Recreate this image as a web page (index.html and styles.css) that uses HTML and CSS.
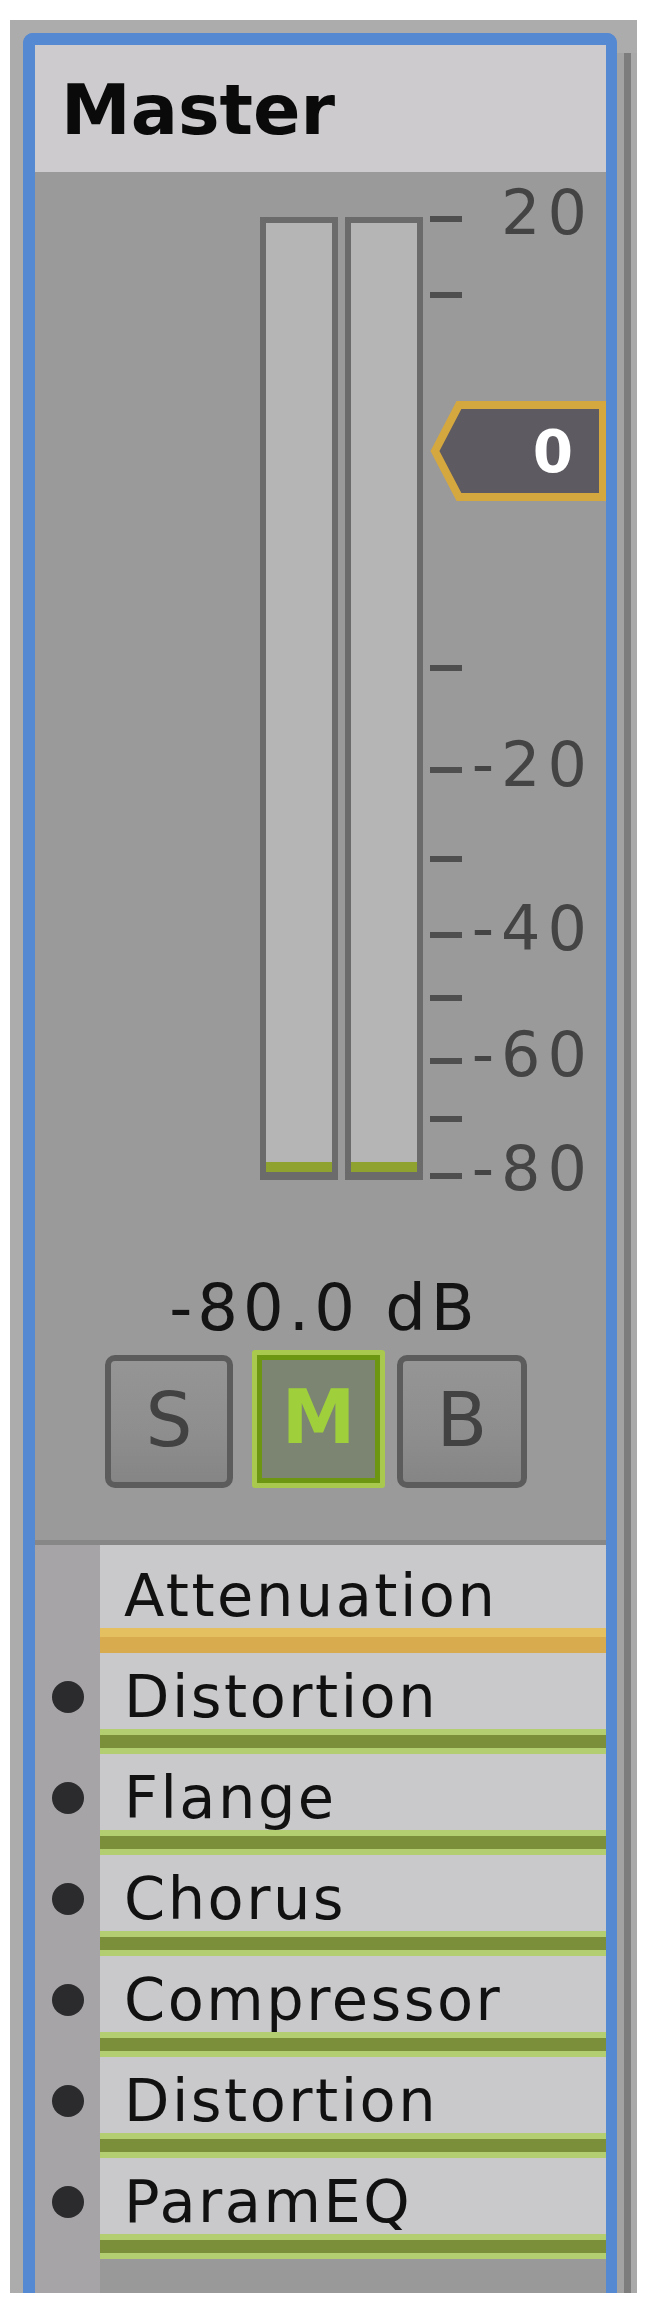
FILE: index.html
```html
<!DOCTYPE html>
<html lang="en">
<head>
<meta charset="UTF-8">
<title>Master</title>
<link rel="stylesheet" href="styles.css">
</head>
<body>
<div class="frame">
  <div class="mixer">
    <div class="title">Master</div>

    <div class="strip">
      <div class="meter">
        <div class="bars">
          <div class="bar"><span class="level"></span></div>
          <div class="bar"><span class="level"></span></div>
        </div>
        <div class="scale">
          <i class="tick" style="top:-1px"></i>
          <i class="tick" style="top:75px"></i>
          <i class="tick" style="top:448px"></i>
          <i class="tick" style="top:550px"></i>
          <i class="tick" style="top:639px"></i>
          <i class="tick" style="top:715px"></i>
          <i class="tick" style="top:778px"></i>
          <i class="tick" style="top:841px"></i>
          <i class="tick" style="top:899px"></i>
          <i class="tick" style="top:956px"></i>

          <span class="mark" style="top:-4px">20</span>
          <span class="mark" style="top:548px">-20</span>
          <span class="mark" style="top:712px">-40</span>
          <span class="mark" style="top:838px">-60</span>
          <span class="mark" style="top:952px">-80</span>

          <div class="fader">
            <svg width="178" height="102" viewBox="0 0 178 102">
              <polygon points="5,51 29,5 173,5 173,97 29,97" fill="#5d5a61" stroke="#d5a73f" stroke-width="8"/>
            </svg>
            <span class="fader-value">0</span>
          </div>
        </div>
      </div>

      <div class="db">-80.0 dB</div>

      <div class="buttons">
        <button class="btn btn-s">S</button>
        <button class="btn btn-m">M</button>
        <button class="btn btn-b">B</button>
      </div>
    </div>

    <ul class="fx">
      <li class="fx-item current"><span class="led-slot"></span><span class="fx-name">Attenuation</span></li>
      <li class="fx-item"><span class="led-slot"><span class="led"></span></span><span class="fx-name">Distortion</span></li>
      <li class="fx-item"><span class="led-slot"><span class="led"></span></span><span class="fx-name">Flange</span></li>
      <li class="fx-item"><span class="led-slot"><span class="led"></span></span><span class="fx-name">Chorus</span></li>
      <li class="fx-item"><span class="led-slot"><span class="led"></span></span><span class="fx-name">Compressor</span></li>
      <li class="fx-item"><span class="led-slot"><span class="led"></span></span><span class="fx-name">Distortion</span></li>
      <li class="fx-item"><span class="led-slot"><span class="led"></span></span><span class="fx-name">ParamEQ</span></li>
    </ul>
  </div>
  <div class="rail"></div>
</div>
</body>
</html>
```

FILE: styles.css
```css
body {
  margin: 0;
  background-color: #ffffff;
  font-family: 'DejaVu Sans', 'Liberation Sans', sans-serif;
  color: #111111;
}

.frame {
  display: flex;
  width: 627px;
  margin: 20px 0 0 10px;
  padding: 13px 0 0 13px;
  box-sizing: border-box;
  background-color: #acacac;
}

.mixer {
  width: 594px;
  box-sizing: border-box;
  border: 12px solid #5589d2;
  border-right-width: 11px;
  border-bottom: 0;
  border-radius: 10px 10px 0 0;
  overflow: hidden;
}

.rail {
  width: 20px;
  margin-top: 20px;
  background: linear-gradient(to right, #a3a3a3 7px, #7d7d7d 7px 14px, #a9a9a9 14px);
}

.title {
  height: 127px;
  box-sizing: border-box;
  padding: 30px 0 0 26px;
  background-color: #cdcbcd;
  font-size: 70px;
  line-height: 70px;
  font-weight: bold;
  color: #0a0a0a;
}

/* meter + fader section */
.strip {
  padding: 45px 0 52px;
  background-color: #9a9a9a;
  border-bottom: 5px solid #878787;
}

.meter {
  display: flex;
  margin-left: 225px;
}

.bars {
  display: flex;
  gap: 7px;
}

.bar {
  display: flex;
  flex-direction: column;
  justify-content: flex-end;
  width: 78px;
  height: 963px;
  box-sizing: border-box;
  border: 6px solid #6b6b6b;
  border-bottom-width: 8px;
  background-color: #b5b5b5;
}

.level {
  height: 10px;
  background-color: #8fa22f;
}

.scale {
  position: relative;
  width: 185px;
}

.tick {
  position: absolute;
  left: 7px;
  width: 32px;
  height: 6px;
  background-color: #4f4f4f;
}

.mark {
  position: absolute;
  right: 12px;
  transform: translateY(-50%);
  font-size: 62px;
  line-height: 62px;
  letter-spacing: 7px;
  color: #444444;
}

.fader {
  position: absolute;
  top: 183px;
  left: 7px;
  width: 178px;
  height: 102px;
}

.fader svg {
  display: block;
}

.fader-value {
  position: absolute;
  top: 0;
  left: 95px;
  width: 56px;
  text-align: center;
  font-size: 58px;
  line-height: 104px;
  font-weight: bold;
  color: #ffffff;
}

.db {
  margin-top: 96px;
  padding-left: 8px;
  text-align: center;
  font-size: 64px;
  line-height: 64px;
  letter-spacing: 5px;
  color: #141414;
}

.buttons {
  display: flex;
  align-items: flex-end;
  height: 138px;
  margin-top: 10px;
  padding-left: 70px;
}

.btn {
  display: flex;
  align-items: center;
  justify-content: center;
  width: 130px;
  height: 133px;
  padding: 0 0 4px;
  box-sizing: border-box;
  border: 6px solid #5c5c5c;
  border-radius: 10px;
  background: linear-gradient(#959595, #8e8e8e 60%, #858585);
  font-family: 'DejaVu Sans', sans-serif;
  font-size: 74px;
  color: #424242;
}

.btn-s {
  width: 128px;
}

.btn-m {
  width: 133px;
  height: 138px;
  margin-left: 19px;
  border: 5px solid #a9c94e;
  border-radius: 3px;
  box-shadow: inset 0 0 0 5px #6d9712;
  background: #7b8571;
  font-weight: bold;
  color: #9fd03b;
}

.btn-b {
  margin-left: 12px;
}

/* effects chain */
.fx {
  list-style: none;
  margin: 0;
  padding: 0 0 34px;
  background: linear-gradient(to right, #a6a4a6 65px, #999999 65px);
}

.fx-item {
  display: flex;
}

.led-slot {
  display: flex;
  justify-content: center;
  width: 65px;
}

.led {
  width: 32px;
  height: 32px;
  margin-top: 28px;
  border-radius: 50%;
  background-color: #2b2a2c;
}

.fx-name {
  flex: 1;
  height: 101px;
  box-sizing: border-box;
  padding: 15px 0 0 24px;
  font-size: 59px;
  line-height: 58px;
  letter-spacing: 2.5px;
  background: linear-gradient(#c9c8ca 76px, #b3ce70 76px 82px, #7b8f3a 82px 95px, #b3ce70 95px);
}

.current .fx-name {
  height: 108px;
  padding-top: 22px;
  background: linear-gradient(#c9c8ca 83px, #e5c060 83px 92px, #d8ab4e 92px);
}
```
